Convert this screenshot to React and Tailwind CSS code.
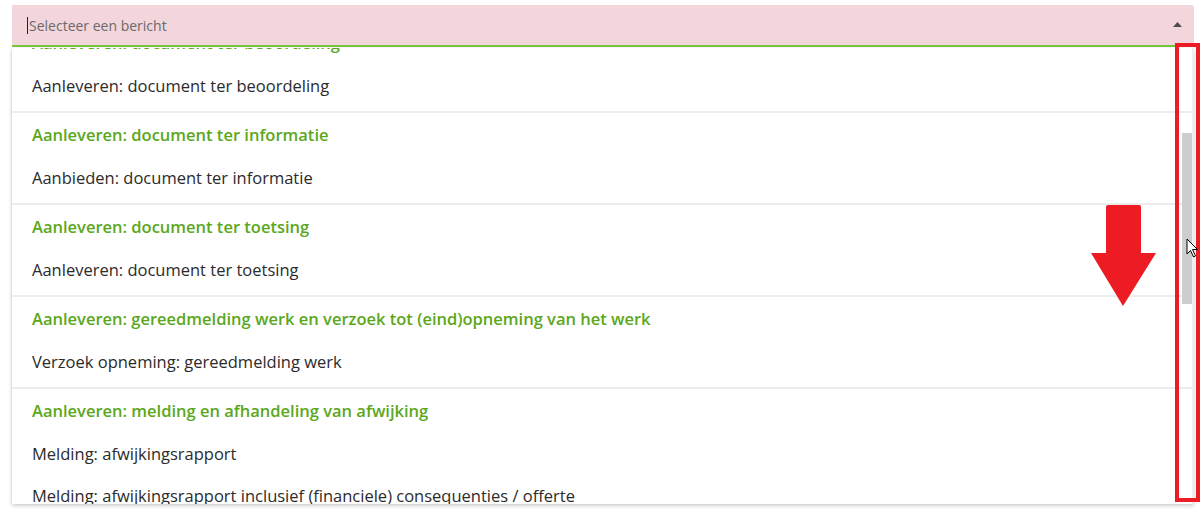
import React from "react";

const groups = [
  {
    title: "Aanleveren: document ter beoordeling",
    items: ["Aanleveren: document ter beoordeling"],
  },
  {
    title: "Aanleveren: document ter informatie",
    items: ["Aanbieden: document ter informatie"],
  },
  {
    title: "Aanleveren: document ter toetsing",
    items: ["Aanleveren: document ter toetsing"],
  },
  {
    title:
      "Aanleveren: gereedmelding werk en verzoek tot (eind)opneming van het werk",
    items: ["Verzoek opneming: gereedmelding werk"],
  },
  {
    title: "Aanleveren: melding en afhandeling van afwijking",
    items: [
      "Melding: afwijkingsrapport",
      "Melding: afwijkingsrapport inclusief (financiele) consequenties / offerte",
      "Melding: afhandeling afwijking",
    ],
  },
];

function Group({ group, first }) {
  return (
    <div
      className={`pb-[4px] ${first ? "mt-[-29px] border-t-2 border-transparent" : "border-t-2 border-[#ececec]"}`}
    >
      <div className="h-[44px] flex items-center pl-[20px] text-[16.5px] font-semibold text-[#5ba71b] whitespace-nowrap">
        {group.title}
      </div>
      {group.items.map((item) => (
        <div
          key={item}
          className="h-[42px] flex items-center pl-[20px] text-[16.5px] text-[#2b2b2b] whitespace-nowrap"
        >
          {item}
        </div>
      ))}
    </div>
  );
}

export default function App() {
  return (
    <div
      className="relative w-[1202px] h-[509px] bg-white overflow-hidden pt-[5px] pl-[12px] pr-[8px]"
      style={{ fontFamily: '"Open Sans", "Noto Sans", sans-serif' }}
    >
      {/* select input */}
      <div className="h-[42px] bg-[#f3d5dc] rounded-tr-[3px] border-b-2 border-[#77c63d] flex items-center pl-[15px] pr-[12px]">
        <span className="w-px h-[17px] bg-[#222]" />
        <span className="ml-px text-[14px] text-[#6a6a6a] flex-1">Selecteer een bericht</span>
        <svg width="9" height="5" viewBox="0 0 9 5" className="mb-[2px]">
          <path d="M0 5 L4.5 0 L9 5 Z" fill="#4d4d4d" />
        </svg>
      </div>

      {/* option list */}
      <div className="relative h-[456px] mt-px bg-white overflow-hidden shadow-[0_2px_4px_rgba(0,0,0,0.18),-1px_0_2px_rgba(0,0,0,0.06)] border-r-2 border-[#eeeeee]">
        {groups.map((g, i) => (
          <Group key={g.title} group={g} first={i === 0} />
        ))}
        {/* scrollbar thumb */}
        <div className="absolute right-0 top-[85px] w-[10px] h-[171px] bg-[#cdcdcd]" />
      </div>

      {/* annotation: outline around scrollbar */}
      <div className="absolute left-[1175px] top-[43px] w-[25px] h-[459px] border-[4px] border-[#ed1c24]" />

      {/* annotation: downward arrow */}
      <svg
        className="absolute left-[1090px] top-[204px]"
        width="68"
        height="104"
        viewBox="0 0 68 104"
      >
        <path
          d="M18 1 H49 a2 2 0 0 1 2 2 V49 H66 L33 102 L1 49 H16 V3 a2 2 0 0 1 2 -2 Z"
          fill="#ed1c24"
        />
      </svg>

      {/* mouse pointer */}
      <svg
        className="absolute left-[1186px] top-[238px]"
        width="14"
        height="21"
        viewBox="0 0 14 21"
      >
        <path
          d="M1 1 V16 L4.5 12.5 L7.5 19 L9.5 18 L6.5 11.5 H11.5 Z"
          fill="#ffffff"
          stroke="#000000"
          strokeWidth="1"
          strokeLinejoin="round"
        />
      </svg>
    </div>
  );
}
